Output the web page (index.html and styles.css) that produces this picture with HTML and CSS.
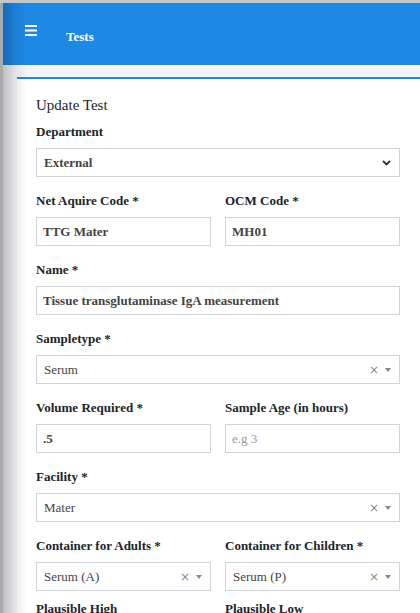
FILE: index.html
```html
<!DOCTYPE html>
<html>
<head>
<meta charset="utf-8">
<link rel="stylesheet" href="styles.css">
</head>
<body>
<div class="app">
  <div class="rail"></div>
  <div class="main">
    <header class="topbar">
      <svg class="burger" width="12" height="11" viewBox="0 0 12 11"><rect x="0" y="0" width="12" height="2" fill="#fff"/><rect x="0" y="4.5" width="12" height="2" fill="#fff"/><rect x="0" y="9" width="12" height="2" fill="#fff"/></svg>
      <span class="title">Tests</span>
    </header>
    <div class="content">
      <div class="card">
        <div class="card-title">Update Test</div>

        <div class="group">
          <label class="lbl">Department</label>
          <div class="field native">
            <span class="val bold">External</span>
            <svg class="chev" width="9" height="6" viewBox="0 0 9 6"><path d="M1 1 L4.5 4.5 L8 1" fill="none" stroke="#333" stroke-width="1.8"/></svg>
          </div>
        </div>

        <div class="row">
          <div class="group">
            <label class="lbl">Net Aquire Code *</label>
            <div class="field"><span class="val bold">TTG Mater</span></div>
          </div>
          <div class="group">
            <label class="lbl">OCM Code *</label>
            <div class="field"><span class="val bold">MH01</span></div>
          </div>
        </div>

        <div class="group">
          <label class="lbl">Name *</label>
          <div class="field"><span class="val bold">Tissue transglutaminase IgA measurement</span></div>
        </div>

        <div class="group">
          <label class="lbl">Sampletype *</label>
          <div class="field s2">
            <span class="val">Serum</span>
            <span class="clear">×</span><span class="arrow"></span>
          </div>
        </div>

        <div class="row">
          <div class="group">
            <label class="lbl">Volume Required *</label>
            <div class="field"><span class="val bold">.5</span></div>
          </div>
          <div class="group">
            <label class="lbl">Sample Age (in hours)</label>
            <div class="field"><span class="val ph">e.g 3</span></div>
          </div>
        </div>

        <div class="group">
          <label class="lbl">Facility *</label>
          <div class="field s2">
            <span class="val">Mater</span>
            <span class="clear">×</span><span class="arrow"></span>
          </div>
        </div>

        <div class="row">
          <div class="group tight">
            <label class="lbl">Container for Adults *</label>
            <div class="field s2">
              <span class="val">Serum (A)</span>
              <span class="clear">×</span><span class="arrow"></span>
            </div>
          </div>
          <div class="group tight">
            <label class="lbl">Container for Children *</label>
            <div class="field s2">
              <span class="val">Serum (P)</span>
              <span class="clear">×</span><span class="arrow"></span>
            </div>
          </div>
        </div>

        <div class="row">
          <div class="group">
            <label class="lbl">Plausible High</label>
            <div class="field"></div>
          </div>
          <div class="group">
            <label class="lbl">Plausible Low</label>
            <div class="field"></div>
          </div>
        </div>
      </div>
    </div>
  </div>
</div>
</body>
</html>
```
FILE: styles.css
```css
html, body {
  margin: 0;
  padding: 0;
  overflow: hidden;
  height: 613px;
}
body {
  font-family: "Liberation Serif", "Times New Roman", serif;
  background: #f4f5f8;
}
.app {
  display: flex;
  border-top: 3px solid #c6c6c6;
  height: 610px;
  width: 420px;
  overflow: hidden;
}
.rail {
  width: 3px;
  flex: 0 0 3px;
  background: #a9a9a9;
}
.main {
  flex: 1;
  position: relative;
  background: #f4f5f8;
  overflow: hidden;
}
.main::after {
  content: "";
  position: absolute;
  left: 0;
  top: 0;
  bottom: 0;
  width: 24px;
  pointer-events: none;
  background: linear-gradient(to right, rgba(0,0,0,0.22) 0, rgba(0,0,0,0.08) 12px, rgba(0,0,0,0) 24px);
}
.topbar {
  height: 62px;
  background: #1e88e5;
  display: flex;
  align-items: flex-start;
  padding-left: 22px;
  color: #fff;
}
.burger {
  margin-top: 22px;
  display: block;
}
.title {
  margin-left: 29px;
  margin-top: 26px;
  font-weight: bold;
  font-size: 13px;
  line-height: 15px;
}
.content {
  padding: 12px 0 0 14px;
}
.card {
  background: #fff;
  border-top: 2px solid #1e88e5;
  width: 364px;
  padding: 17px 40px 0 19px;
}
.card-title {
  font-size: 15px;
  line-height: 18px;
  color: #212529;
  margin-bottom: 10px;
}
.row {
  display: flex;
  gap: 14px;
}
.row .group {
  flex: 1;
  min-width: 0;
}
.group {
  margin-bottom: 16px;
}
.group.tight {
  margin-bottom: 10px;
}
.lbl {
  display: block;
  font-weight: bold;
  font-size: 13px;
  line-height: 16px;
  color: #212529;
  margin-bottom: 8px;
}
.field {
  height: 29px;
  box-sizing: border-box;
  border: 1px solid #ced4da;
  background: #fff;
  display: flex;
  align-items: center;
  padding: 0 6px;
  font-size: 13px;
  color: #444;
}
.val {
  flex: 1;
  white-space: nowrap;
  overflow: hidden;
}
.bold {
  font-weight: bold;
}
.native {
  padding: 0 8px 0 7px;
}
.chev {
  display: block;
}
.s2 {
  padding: 0 8px 0 7px;
}
.ph {
  color: #9a9a9a;
}
.clear {
  color: #888;
  font-family: "DejaVu Sans", sans-serif;
  font-size: 12px;
  margin-right: 6px;
}
.arrow {
  width: 0;
  height: 0;
  border-left: 3.5px solid transparent;
  border-right: 3.5px solid transparent;
  border-top: 4px solid #888;
}
```
